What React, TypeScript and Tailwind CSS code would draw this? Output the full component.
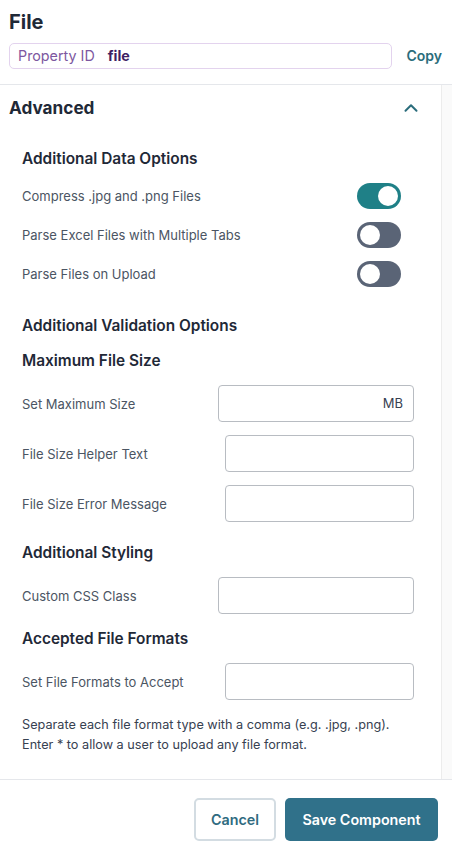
import { ChevronUp } from "lucide-react";

const FONT = { fontFamily: "Inter, 'Noto Sans', sans-serif" };

function Toggle({ on }: { on: boolean }) {
  return (
    <div
      className={`w-[44px] h-[26px] rounded-full flex items-center px-[3px] ${
        on ? "bg-[#1f8087] justify-end" : "bg-[#5a6476] justify-start"
      }`}
    >
      <div className="w-[20px] h-[20px] rounded-full bg-white" />
    </div>
  );
}

function ToggleRow({ label, on }: { label: string; on: boolean }) {
  return (
    <div className="h-[39px] flex items-center justify-between pr-[13px]">
      <span className="text-[13px] pt-[2px] text-[#4b5563]">{label}</span>
      <Toggle on={on} />
    </div>
  );
}

function InputRow({ label, wide, suffix }: { label: string; wide?: boolean; suffix?: string }) {
  return (
    <div className="h-[37px] flex items-center justify-between">
      <span className="text-[13px] pt-[2px] text-[#4b5563]">{label}</span>
      <div
        className={`h-[37px] ${wide ? "w-[196px]" : "w-[189px]"} border border-[#b8bcc2] rounded-[4px] flex items-center justify-end pr-[10px] text-[13px] text-[#374151]`}
      >
        {suffix}
      </div>
    </div>
  );
}

function Heading({ children, className = "" }: { children: string; className?: string }) {
  return (
    <h3 className={`h-[22px] flex items-center text-[15.4px] font-semibold text-[#1f2937] ${className}`}>
      {children}
    </h3>
  );
}

export default function App() {
  return (
    <div className="w-[452px] h-[848px] bg-white flex flex-col" style={FONT}>
      {/* Header */}
      <div className="px-[9px] pt-[8px] pb-[15px] border-b border-[#e5e7eb]">
        <h1 className="text-xl leading-[28px] font-bold text-[#1f2937]">File</h1>
        <div className="mt-[7px] flex items-center gap-[14px] pr-[1px]">
          <div className="flex-1 h-[26px] border border-[#e3d3ee] rounded-[5px] flex items-center px-[8px] text-[14.3px]">
            <span className="text-[#7d57a0]">Property ID</span>
            <span className="ml-[13px] font-bold text-[#3f1f63]">file</span>
          </div>
          <button className="text-sm font-semibold text-[#2b6d7c]">Copy</button>
        </div>
      </div>

      {/* Content */}
      <div className="flex-1 flex min-h-0">
        <div className="flex-1 flex flex-col">
          <div className="h-[46px] flex items-center justify-between pl-[9px] pr-[19px]">
            <h2 className="text-[17.2px] font-bold text-[#1f2937]">Advanced</h2>
            <ChevronUp size={22} strokeWidth={2.2} className="text-[#2b6d7c]" />
          </div>

          <div className="pl-[22px] pr-[27px] pt-[17px] flex flex-col">
            <Heading>Additional Data Options</Heading>
            <div className="mt-[6px] flex flex-col">
              <ToggleRow label="Compress .jpg and .png Files" on />
              <ToggleRow label="Parse Excel Files with Multiple Tabs" on={false} />
              <ToggleRow label="Parse Files on Upload" on={false} />
            </div>

            <Heading className="mt-[22px]">Additional Validation Options</Heading>
            <Heading className="mt-[13px]">Maximum File Size</Heading>
            <div className="mt-[13px] flex flex-col gap-[13px]">
              <InputRow label="Set Maximum Size" wide suffix="MB" />
              <InputRow label="File Size Helper Text" />
              <InputRow label="File Size Error Message" />
            </div>

            <Heading className="mt-[20px]">Additional Styling</Heading>
            <div className="mt-[13px]">
              <InputRow label="Custom CSS Class" wide />
            </div>

            <Heading className="mt-[14px]">Accepted File Formats</Heading>
            <div className="mt-[13px]">
              <InputRow label="Set File Formats to Accept" />
            </div>

            <p className="mt-[15px] text-[12.7px] leading-[20px] text-[#374151]">
              Separate each file format type with a comma (e.g. .jpg, .png).
              <br />
              Enter * to allow a user to upload any file format.
            </p>
          </div>
        </div>
        <div className="w-[11px] bg-[#fafafa] border-l border-[#ececec]" />
      </div>

      {/* Footer */}
      <div className="border-t border-[#e5e7eb] h-[69px] flex justify-end gap-[9px] pt-[18px] pr-[14px]">
        <button className="w-[82px] h-[43px] rounded-[5px] border-2 border-[#d3dce2] text-[14.3px] font-semibold text-[#2f6b80]">
          Cancel
        </button>
        <button className="w-[153px] h-[43px] rounded-[5px] bg-[#30718a] text-[14.3px] font-semibold text-white">
          Save Component
        </button>
      </div>
    </div>
  );
}
